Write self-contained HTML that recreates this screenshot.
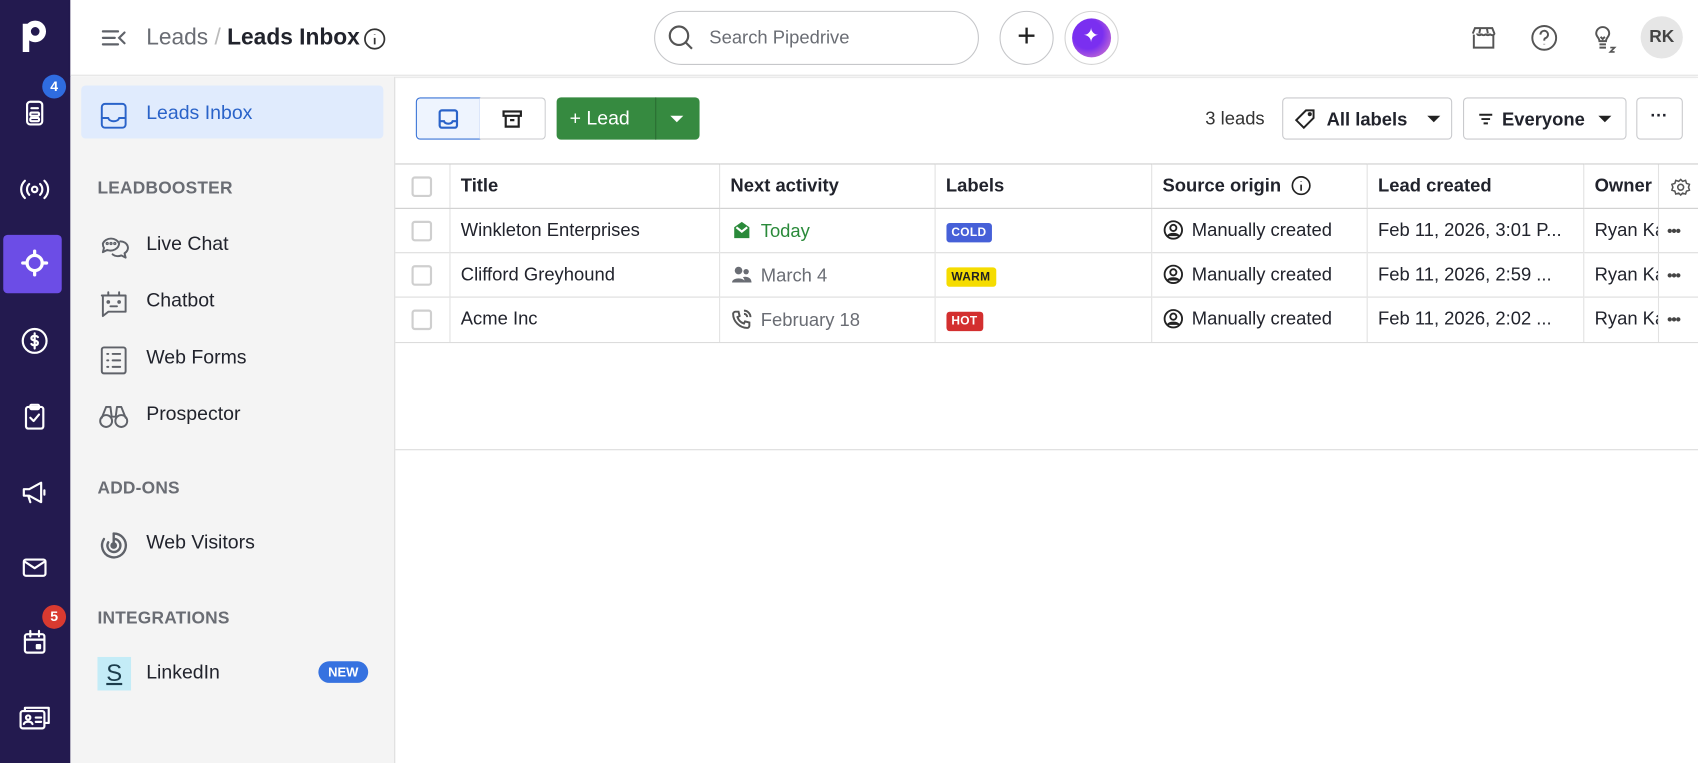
<!DOCTYPE html>
<html><head><meta charset="utf-8"><style>
*{box-sizing:border-box;margin:0;padding:0}
html,body{width:1698px;height:763px;overflow:hidden;background:#fff}
body{font-family:"Liberation Sans",Arial,sans-serif;color:#21232c}
#w{position:absolute;left:0;top:0;width:1568px;height:705px;transform:scale(1.08291,1.0823);transform-origin:0 0}
.a{position:absolute}
.nav{left:0;top:0;width:65px;height:705px;background:#231a4f}
.nav svg{position:absolute;left:18px;width:28px;height:28px;fill:none;stroke:#fff;stroke-width:2;stroke-linecap:round;stroke-linejoin:round}
.badge{position:absolute;width:22px;height:22px;border-radius:11px;color:#fff;font-size:13px;font-weight:bold;text-align:center;line-height:22px}
.top{left:65px;top:0;width:1503px;height:70px;background:#fff;border-bottom:1px solid #e3e3e3;box-shadow:0 1px 3px rgba(0,0,0,.06)}
.side{left:65px;top:71px;width:300px;height:634px;background:#f4f4f4;border-right:1px solid #ddd}
.item{position:absolute;left:25px;font-size:18px;color:#21232c}
.item svg{position:absolute;left:0;top:-2px;width:30px;height:30px;fill:none;stroke:#5f6269;stroke-width:1.8;stroke-linecap:round;stroke-linejoin:round}
.item span{position:absolute;left:45px;top:0;white-space:nowrap}
.sec{position:absolute;left:25px;font-size:16px;font-weight:bold;color:#6a6d74;letter-spacing:.2px}
.btn{position:absolute;top:90px;height:39px;border:1px solid #c9cacd;border-radius:4px;background:#fff;font-size:17px;font-weight:bold}
table{position:absolute;left:365px;top:151px;width:1203px;border-collapse:collapse;font-size:17px;table-layout:fixed}
td{height:41px;border-top:1px solid #dcdcdc;border-left:1px solid #e2e2e2;padding-left:10px;white-space:nowrap;overflow:hidden}
tr.h td{font-weight:bold;border-top:1px solid #ccc;border-bottom:1px solid #ccc}
td:first-child{border-left:none;padding-left:15px}
.cb{width:19px;height:19px;border:2px solid #cfcfcf;border-radius:3px;display:inline-block;vertical-align:middle}
.lab{display:inline-block;font-size:11px;font-weight:bold;padding:3px 5px;border-radius:3px;letter-spacing:.3px}
.ic{display:inline-block;vertical-align:-4px;margin-right:8px}
.dots{position:absolute;left:8px;font-size:14px;letter-spacing:-1px;color:#444;font-weight:bold}
</style></head><body><div id="w">
<div class="a nav">
  <svg style="top:16px;left:19px;width:26px;height:34px;stroke-width:6;stroke-linecap:butt" viewBox="0 0 26 34"><path d="M5 6v26"/><circle cx="13.5" cy="13" r="7"/></svg>
  <svg style="top:90px" viewBox="0 0 28 28"><rect x="7" y="4" width="14" height="21" rx="3"/><line x1="11" y1="10" x2="17" y2="10"/><rect x="10" y="14" width="8" height="3" rx="1"/><rect x="10" y="19" width="8" height="3" rx="1"/></svg>
  <div class="badge" style="left:39px;top:69px;background:#2f6ce0">4</div>
  <svg style="top:161px" viewBox="0 0 28 28"><circle cx="14" cy="14" r="2.5"/><path d="M9 9a7 7 0 0 0 0 10M19 9a7 7 0 0 1 0 10M5 6a11 11 0 0 0 0 16M23 6a11 11 0 0 1 0 16"/></svg>
  <div class="a" style="left:3px;top:217px;width:54px;height:54px;background:#6c4de6;border-radius:4px"></div>
  <svg style="top:229px;stroke-width:3" viewBox="0 0 28 28"><circle cx="14" cy="14" r="7"/><path d="M14 3v4M14 21v4M3 14h4M21 14h4"/></svg>
  <svg style="top:301px" viewBox="0 0 28 28"><circle cx="14" cy="14" r="11"/><path d="M17 10.5c-1-1.5-6-1.8-6 1s6 1.5 6 4.3-5 2.7-6 1M14 7v14"/></svg>
  <svg style="top:371px" viewBox="0 0 28 28"><rect x="6" y="5" width="16" height="20" rx="2"/><rect x="10" y="3" width="8" height="4" rx="1"/><path d="M10 15l3 3 5-6"/></svg>
  <svg style="top:441px" viewBox="0 0 28 28"><path d="M4 11h5l11-6v18l-11-6H4zM8 17l2 6M23 12v4"/></svg>
  <svg style="top:510px" viewBox="0 0 28 28"><rect x="4" y="7" width="20" height="15" rx="2"/><path d="M5 9l9 6 9-6"/></svg>
  <svg style="top:579px" viewBox="0 0 28 28"><rect x="5" y="7" width="18" height="17" rx="2"/><path d="M10 4v5M18 4v5M5 12h18"/><rect x="16" y="17" width="3" height="3" fill="#fff"/></svg>
  <div class="badge" style="left:39px;top:559px;background:#d93a30">5</div>
  <svg style="top:649px;left:16px;width:32px" viewBox="0 0 32 28"><rect x="3" y="8" width="22" height="16" rx="2"/><path d="M7 8V5h22v14h-4"/><circle cx="10" cy="14" r="2"/><path d="M6 20c1-3 7-3 8 0M17 14h5M17 18h5"/></svg>
</div>
<div class="a top">
  <svg class="a" style="left:27px;top:23px" width="26" height="24" viewBox="0 0 26 24" fill="none" stroke="#5f6269" stroke-width="2" stroke-linecap="round"><path d="M3 6h14M3 12h11M3 18h14M23 7l-5 5 5 5"/></svg>
  <div class="a" style="left:70px;top:23px;font-size:21px;color:#6a6d74">Leads <span style="color:#bbb">/</span> <b style="color:#21232c">Leads Inbox</b></div>
  <svg class="a" style="left:270px;top:25px" width="22" height="22" viewBox="0 0 22 22" fill="none" stroke="#333" stroke-width="1.6"><circle cx="11" cy="11" r="9"/><path d="M11 10v6M11 6.5v.5"/></svg>
  <div class="a" style="left:539px;top:10px;width:300px;height:50px;border:1px solid #c6c7ca;border-radius:25px"></div>
  <svg class="a" style="left:550px;top:21px" width="28" height="28" viewBox="0 0 28 28" fill="none" stroke="#555" stroke-width="2"><circle cx="12" cy="12" r="8.5"/><path d="M18 18l6 6"/></svg>
  <div class="a" style="left:590px;top:25px;font-size:17px;color:#6a6d74">Search Pipedrive</div>
  <div class="a" style="left:858px;top:10px;width:50px;height:50px;border:1px solid #c6c7ca;border-radius:25px;text-align:center;line-height:46px;font-size:30px;font-weight:300;color:#222">+</div>
  <div class="a" style="left:918px;top:10px;width:50px;height:50px;border:1px solid #d4d4d4;border-radius:25px"></div>
  <div class="a" style="left:925px;top:17px;width:36px;height:36px;border-radius:18px;background:radial-gradient(circle at 40% 40%,#7a2ff0 45%,#b560d8 75%,#f3d8ee 100%)"></div>
  <div class="a" style="left:935px;top:23px;color:#fff;font-size:18px">✦</div>
  <svg class="a" style="left:1292px;top:22px" width="26" height="26" viewBox="0 0 26 26" fill="none" stroke="#555" stroke-width="1.8"><path d="M4 10v12h18V10M3 9l2-5h16l2 5c0 2-4 2-4 0 0 2-4 2-4 0 0 2-4 2-4 0 0 2-4 2-4 0M10 4l-1 5M16 4l1 5"/></svg>
  <svg class="a" style="left:1348px;top:22px" width="26" height="26" viewBox="0 0 26 26" fill="none" stroke="#555" stroke-width="1.8"><circle cx="13" cy="13" r="11"/><path d="M9.5 10a3.5 3.5 0 1 1 4.5 3.3c-1 .4-1 1-1 2.2M13 18.5v.5"/></svg>
  <svg class="a" style="left:1402px;top:21px" width="28" height="30" viewBox="0 0 28 30" fill="none" stroke="#555" stroke-width="1.8"><path d="M7 10a6 6 0 1 1 12 0c0 3-3 4-3 7h-6c0-3-3-4-3-7zM10 20h6M10 23h6M11 13l2 2 2-2"/><path d="M20 23h4l-4 4h4" stroke-width="1.5"/></svg>
  <div class="a" style="left:1450px;top:15px;width:39px;height:39px;border-radius:20px;background:#e6e6e6;text-align:center;line-height:39px;font-size:16px;font-weight:bold;color:#444">RK</div>
</div>
<div class="a side">
  <div class="a" style="left:10px;top:8px;width:279px;height:49px;background:#e0ebfd;border-radius:4px"></div>
  <div class="item" style="top:23px;color:#2a63c9"><svg viewBox="0 0 30 30" style="stroke:#2a63c9"><rect x="4" y="4" width="22" height="22" rx="3"/><path d="M4 17h6c1 4 9 4 10 0h6"/></svg><span>Leads Inbox</span></div>
  <div class="sec" style="top:95px">LEADBOOSTER</div>
  <div class="item" style="top:144px"><svg viewBox="0 0 30 30"><path d="M5 12a8 7 0 0 1 15 0 8 7 0 0 1-11 6l-4 2 1-4a7 7 0 0 1-1-4zM21 10a7 6 0 0 1 4 11l1 4-4-2a7 6 0 0 1-8-1"/><circle cx="9" cy="12" r=".6"/><circle cx="12.5" cy="12" r=".6"/><circle cx="16" cy="12" r=".6"/></svg><span>Live Chat</span></div>
  <div class="item" style="top:196px"><svg viewBox="0 0 30 30"><path d="M4 8h22v15H10l-5 4V8zM10 8V5M20 8V5"/><circle cx="10" cy="14" r=".8"/><circle cx="20" cy="14" r=".8"/><path d="M12 18h6"/></svg><span>Chatbot</span></div>
  <div class="item" style="top:249px"><svg viewBox="0 0 30 30"><rect x="4" y="3" width="22" height="24" rx="2"/><path d="M9 9h1M14 9h7M9 15h1M14 15h7M9 21h1M14 21h7"/></svg><span>Web Forms</span></div>
  <div class="item" style="top:301px"><svg viewBox="0 0 30 30"><circle cx="8" cy="19" r="5.5"/><circle cx="22" cy="19" r="5.5"/><path d="M4 16l4-10h4l1 8M26 16l-4-10h-4l-1 8M13 15h4"/></svg><span>Prospector</span></div>
  <div class="sec" style="top:372px">ADD-ONS</div>
  <div class="item" style="top:420px"><svg viewBox="0 0 30 30" style="stroke-width:2.2"><path d="M15 4a11 11 0 1 1-9 5"/><path d="M15 9a6 6 0 1 1-5 3"/><circle cx="15" cy="15" r="2" fill="#5f6269"/><path d="M15 4v11"/></svg><span>Web Visitors</span></div>
  <div class="sec" style="top:492px">INTEGRATIONS</div>
  <div class="item" style="top:540px"><div class="a" style="left:0;top:-4px;width:31px;height:31px;background:#c4ecf7;color:#1c3d4c;text-align:center;font-size:22px;line-height:30px;text-decoration:underline">S</div><span>LinkedIn</span></div>
  <div class="a" style="left:229px;top:540px;width:46px;height:20px;border-radius:10px;background:#3672e0;color:#fff;font-size:12px;font-weight:bold;text-align:center;line-height:20px">NEW</div>
</div>
<div class="a" style="left:365px;top:71px;width:1203px;height:1px;background:#e8e8e8"></div>
<div class="btn" style="left:384px;width:60px;background:#eef4fe;border-color:#3a73d6;border-radius:4px 0 0 4px"><svg style="position:absolute;left:19px;top:9px" width="20" height="20" viewBox="0 0 20 20" fill="none" stroke="#2a63c9" stroke-width="2"><rect x="2" y="2" width="16" height="16" rx="2"/><path d="M2 12h4c1 3 7 3 8 0h4"/></svg></div>
<div class="btn" style="left:443px;width:61px;border-left:none;border-radius:0 4px 4px 0"><svg style="position:absolute;left:20px;top:9px" width="20" height="20" viewBox="0 0 20 20" fill="none" stroke="#222" stroke-width="2"><rect x="2" y="3" width="16" height="4"/><path d="M4 7v10h12V7M8 11h4"/></svg></div>
<div class="btn" style="left:514px;width:132px;background:#368a40;border:none;color:#fff;font-weight:normal;font-size:18px"><span style="position:absolute;left:12px;top:9px">+ Lead</span><div style="position:absolute;left:91px;top:0;width:1px;height:39px;background:#2a6d33"></div><div style="position:absolute;left:105px;top:17px;border:6px solid transparent;border-top:6px solid #fff;border-bottom:none"></div></div>
<div class="a" style="left:1113px;top:100px;font-size:17px;color:#333">3 leads</div>
<div class="btn" style="left:1184px;width:157px"><svg style="position:absolute;left:10px;top:9px" width="20" height="20" viewBox="0 0 20 20" fill="none" stroke="#222" stroke-width="1.8"><path d="M11 2h7v7l-9 9-7-7z"/><circle cx="14.5" cy="5.5" r="1"/></svg><span style="position:absolute;left:40px;top:10px">All labels</span><div style="position:absolute;left:133px;top:16px;border:6px solid transparent;border-top:6px solid #222;border-bottom:none"></div></div>
<div class="btn" style="left:1351px;width:151px"><svg style="position:absolute;left:12px;top:11px" width="16" height="16" viewBox="0 0 16 16" fill="none" stroke="#222" stroke-width="1.8"><path d="M2 4h12M4 8h8M6 12h4"/></svg><span style="position:absolute;left:35px;top:10px">Everyone</span><div style="position:absolute;left:124px;top:16px;border:6px solid transparent;border-top:6px solid #222;border-bottom:none"></div></div>
<div class="btn" style="left:1511px;width:43px"><span style="position:absolute;left:12px;top:8px;font-size:16px">···</span></div>
<table>
<colgroup><col style="width:50px"><col style="width:249px"><col style="width:199px"><col style="width:200px"><col style="width:199px"><col style="width:200px"><col style="width:69px"><col></colgroup>
<tr class="h"><td><span class="cb"></span></td><td>Title</td><td>Next activity</td><td>Labels</td><td>Source origin <svg class="ic" style="margin:0 0 0 4px" width="19" height="19" viewBox="0 0 20 20" fill="none" stroke="#222" stroke-width="1.6"><circle cx="10" cy="10" r="8.5"/><path d="M10 9v6M10 5.5v.5"/></svg></td><td>Lead created</td><td>Owner</td><td style="position:relative;padding:0"><svg style="position:absolute;left:11px;top:12px" width="18" height="18" viewBox="0 0 20 20" fill="none" stroke="#555" stroke-width="1.6"><circle cx="10" cy="10" r="3"/><path d="M10 2l2 2 3-1 1 3 3 1-1 3 1 3-3 1-1 3-3-1-2 2-2-2-3 1-1-3-3-1 1-3-1-3 3-1 1-3 3 1z"/></svg></td></tr>
<tr><td><span class="cb"></span></td><td>Winkleton Enterprises</td><td style="color:#2a8a3a"><svg class="ic" width="20" height="20" viewBox="0 0 20 20"><path d="M3 7l7-5 7 5v10H3z" fill="#2a8a3a"/><path d="M5 7l5 4 5-4" fill="none" stroke="#fff" stroke-width="2"/></svg>Today</td><td><span class="lab" style="background:#4660d8;color:#fff">COLD</span></td><td><svg class="ic" width="19" height="19" viewBox="0 0 20 20" fill="none" stroke="#222" stroke-width="1.8"><circle cx="10" cy="10" r="8.5"/><circle cx="10" cy="8" r="3"/><path d="M4.5 16c2-3 9-3 11 0" fill="#222"/></svg>Manually created</td><td>Feb 11, 2026, 3:01 P...</td><td>Ryan Ka</td><td style="position:relative;padding:0"><span class="dots" style="top:12px">•••</span></td></tr>
<tr><td><span class="cb"></span></td><td>Clifford Greyhound</td><td style="color:#6a6d74"><svg class="ic" width="20" height="20" viewBox="0 0 20 20" fill="#6a6d74"><circle cx="7" cy="6" r="3.5"/><path d="M1 17c0-5 12-5 12 0z"/><circle cx="14" cy="7" r="2.5"/><path d="M12 17c1-2 0-4-1-5 3-1 8 0 8 5z"/></svg>March 4</td><td><span class="lab" style="background:#f5dc00;color:#222">WARM</span></td><td><svg class="ic" width="19" height="19" viewBox="0 0 20 20" fill="none" stroke="#222" stroke-width="1.8"><circle cx="10" cy="10" r="8.5"/><circle cx="10" cy="8" r="3"/><path d="M4.5 16c2-3 9-3 11 0" fill="#222"/></svg>Manually created</td><td>Feb 11, 2026, 2:59 ...</td><td>Ryan Ka</td><td style="position:relative;padding:0"><span class="dots" style="top:12px">•••</span></td></tr>
<tr><td><span class="cb"></span></td><td>Acme Inc</td><td style="color:#6a6d74"><svg class="ic" width="20" height="20" viewBox="0 0 20 20" fill="none" stroke="#555" stroke-width="1.8"><path d="M4 3l3 0 1 4-2 1c1 3 3 5 6 6l1-2 4 1v3c0 1-1 2-2 2C8 18 2 12 2 5c0-1 1-2 2-2zM12 2a6 6 0 0 1 6 6M12 5a3 3 0 0 1 3 3"/></svg>February 18</td><td><span class="lab" style="background:#d32f2f;color:#fff">HOT</span></td><td><svg class="ic" width="19" height="19" viewBox="0 0 20 20" fill="none" stroke="#222" stroke-width="1.8"><circle cx="10" cy="10" r="8.5"/><circle cx="10" cy="8" r="3"/><path d="M4.5 16c2-3 9-3 11 0" fill="#222"/></svg>Manually created</td><td>Feb 11, 2026, 2:02 ...</td><td>Ryan Ka</td><td style="position:relative;padding:0"><span class="dots" style="top:12px">•••</span></td></tr>
</table>
<div class="a" style="left:365px;top:316px;width:1203px;height:1px;background:#dcdcdc"></div>
<div class="a" style="left:365px;top:415px;width:1203px;height:1px;background:#dcdcdc"></div>
</div></body></html>
